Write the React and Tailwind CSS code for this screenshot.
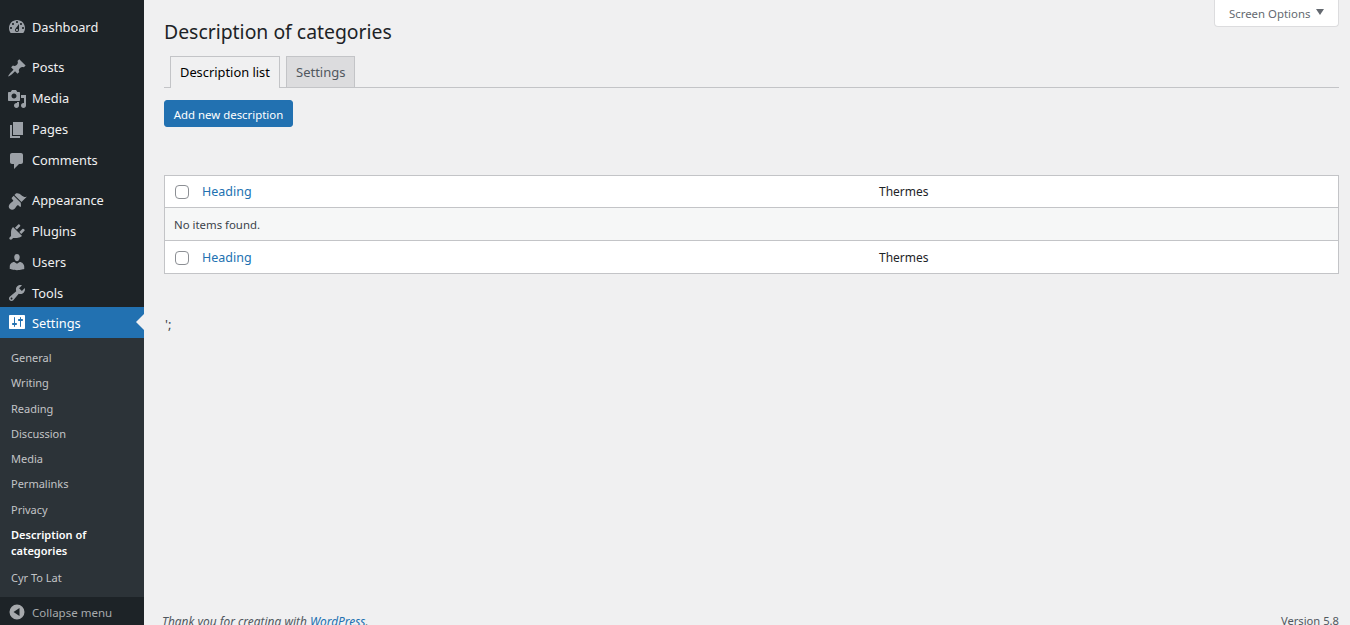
import React from "react";

const ICONS = {
  dashboard: "M3.76 16h12.48c1.1-1.37 1.76-3.11 1.76-5 0-4.42-3.58-8-8-8s-8 3.58-8 8c0 1.89.66 3.63 1.76 5zM10 4c.55 0 1 .45 1 1s-.45 1-1 1-1-.45-1-1 .45-1 1-1zM6 6c.55 0 1 .45 1 1s-.45 1-1 1-1-.45-1-1 .45-1 1-1zm8 0c.55 0 1 .45 1 1s-.45 1-1 1-1-.45-1-1 .45-1 1-1zm-5.37 5.55L12 7v6c0 1.1-.9 2-2 2s-2-.9-2-2c0-.57.24-1.08.63-1.45zM4 10c.55 0 1 .45 1 1s-.45 1-1 1-1-.45-1-1 .45-1 1-1zm12 0c.55 0 1 .45 1 1s-.45 1-1 1-1-.45-1-1 .45-1 1-1zm-5 3c0-.55-.45-1-1-1s-1 .45-1 1 .45 1 1 1 1-.45 1-1z",
  posts: "M10.44 3.02l1.82-1.82 6.36 6.35-1.83 1.82c-1.05-.68-2.48-.57-3.41.36l-.75.75c-.92.93-1.04 2.35-.35 3.41l-1.83 1.82-2.41-2.41-2.8 2.79c-.42.42-3.38 2.71-3.8 2.29s1.86-3.39 2.28-3.81l2.79-2.79L4.1 9.36l1.83-1.82c1.05.69 2.48.57 3.4-.36l.75-.75c.93-.92 1.05-2.35.36-3.41z",
  media: "M13 11V4c0-.55-.45-1-1-1h-1.67L9 1H5L3.67 3H2c-.55 0-1 .45-1 1v7c0 .55.45 1 1 1h10c.55 0 1-.45 1-1zM7 4.5c1.38 0 2.5 1.12 2.5 2.5S8.38 9.5 7 9.5 4.5 8.38 4.5 7 5.62 4.5 7 4.5zM14 6h5v10.5c0 1.38-1.12 2.5-2.5 2.5S14 17.88 14 16.5s1.12-2.5 2.5-2.5c.17 0 .34.02.5.05V9h-3V6zm-4 8.05V13h2v3.5c0 1.38-1.12 2.5-2.5 2.5S7 17.88 7 16.5 8.12 14 9.5 14c.17 0 .34.02.5.05z",
  pages: "M6 15V2h10v13H6zm-1 1h8v2H3V5h2v11z",
  comments: "M5 2h9c1.1 0 2 .9 2 2v7c0 1.1-.9 2-2 2h-2l-5 5v-5H5c-1.1 0-2-.9-2-2V4c0-1.1.9-2 2-2z",
  appearance: "M14.48 11.06L7.41 3.99l1.5-1.5c.5-.56 2.3-.47 3.51.32 1.21.8 1.43 1.28 2.91 2.1 1.18.64 2.45 1.26 4.45.85zm-.71.71L6.7 4.7 4.93 6.47c-.39.39-.39 1.02 0 1.41l1.06 1.06c.39.39.39 1.03 0 1.42-.6.6-1.43 1.11-2.21 1.69-.35.26-.7.53-1.01.84-1.34 1.34-1.34 3.5 0 4.84s3.5 1.34 4.84 0c.31-.31.58-.66.84-1.01.58-.78 1.09-1.61 1.69-2.21.39-.39 1.03-.39 1.42 0l1.06 1.06c.39.39 1.02.39 1.41 0z",
  plugins: "M13.11 4.36L9.87 7.6 8 5.73l3.24-3.24c.35-.34 1.05-.2 1.56.32.52.51.66 1.21.31 1.55zm-8 1.77l.91-1.12 9.01 9.01-1.19.84c-.71.71-2.63 1.16-3.82 1.16H6.14L4.9 17.26c-.59.59-1.54.59-2.12 0-.59-.58-.59-1.53 0-2.12l1.24-1.24v-3.88c0-1.13.4-3.19 1.09-3.89zm7.26 3.97l3.24-3.24c.34-.35 1.04-.21 1.55.31.52.51.66 1.21.31 1.55l-3.24 3.25z",
  users: "M10 9.25c-2.27 0-2.73-3.44-2.73-3.44C7 4.02 7.82 2 9.97 2c2.16 0 2.98 2.02 2.71 3.81 0 0-.41 3.44-2.68 3.44zm0 2.57L12.72 10c2.39 0 4.52 2.33 4.52 4.53v2.49s-3.65 1.13-7.24 1.13c-3.65 0-7.24-1.13-7.24-1.13v-2.49c0-2.25 1.94-4.48 4.47-4.48z",
  tools: "M16.68 9.77c-1.34 1.34-3.3 1.67-4.95.99l-5.41 6.52c-.99.99-2.59.99-3.58 0s-.99-2.59 0-3.57l6.52-5.42c-.68-1.65-.35-3.61.99-4.95 1.28-1.28 3.12-1.62 4.72-1.06l-2.89 2.89 2.82 2.82 2.86-2.87c.53 1.58.18 3.39-1.08 4.65zM3.81 16.21c.4.39 1.04.39 1.43 0 .4-.4.4-1.04 0-1.43-.39-.4-1.03-.4-1.43 0-.39.39-.39 1.03 0 1.43z",
  settings: "M18 16V4c0-.55-.45-1-1-1H3c-.55 0-1 .45-1 1v12c0 .55.45 1 1 1h14c.55 0 1-.45 1-1zM8 11h1c.55 0 1 .45 1 1s-.45 1-1 1H8v1.5c0 .28-.22.5-.5.5s-.5-.22-.5-.5V13H6c-.55 0-1-.45-1-1s.45-1 1-1h1V5.5c0-.28.22-.5.5-.5s.5.22.5.5V11zm5-2h-1c-.55 0-1-.45-1-1s.45-1 1-1h1V5.5c0-.28.22-.5.5-.5s.5.22.5.5V7h1c.55 0 1 .45 1 1s-.45 1-1 1h-1v5.5c0 .28-.22.5-.5.5s-.5-.22-.5-.5V9z",
  collapse: "M10 2.5a7.5 7.5 0 1 0 0 15 7.5 7.5 0 0 0 0-15zM12.5 6v8L6.5 10z",
};

const Icon = ({ name, className = "" }) => (
  <svg viewBox="0 0 20 20" className={`w-5 h-5 shrink-0 fill-current ${className}`}>
    <path fillRule="evenodd" d={ICONS[name]} />
  </svg>
);

const MenuItem = ({ icon, label, current }) => (
  <div className={`relative flex items-center shrink-0 pl-[7px] gap-[5px] text-[12.8px] ${current ? "-mt-[1.9px] h-[31px] bg-[#2271b1] text-white" : "h-[30.9px] text-[#f0f0f1]"}`}>
    <Icon name={icon} className={current ? "text-white" : "text-[#9ca1a7]"} />
    <span className={current ? "pt-[2px]" : ""}>{label}</span>
    {current && <div className="absolute right-0 top-1/2 -translate-y-1/2 border-y-[8px] border-r-[8px] border-y-transparent border-r-[#f0f0f1]" />}
  </div>
);

const subItems = ["General", "Writing", "Reading", "Discussion", "Media", "Permalinks", "Privacy"];

const Sidebar = () => (
  <aside className="w-[144px] shrink-0 bg-[#1d2327] flex flex-col pt-3">
    <MenuItem icon="dashboard" label="Dashboard" />
    <div className="h-[9.5px] shrink-0" />
    <MenuItem icon="posts" label="Posts" />
    <MenuItem icon="media" label="Media" />
    <MenuItem icon="pages" label="Pages" />
    <MenuItem icon="comments" label="Comments" />
    <div className="h-[9.3px] shrink-0" />
    <MenuItem icon="appearance" label="Appearance" />
    <MenuItem icon="plugins" label="Plugins" />
    <MenuItem icon="users" label="Users" />
    <MenuItem icon="tools" label="Tools" />
    <MenuItem icon="settings" label="Settings" current />
    <div className="bg-[#2c3338] pt-[7.5px] h-[259px] shrink-0 text-[11px] leading-[16.3px] text-[#c3c4c7]">
      {subItems.map((s) => (
        <div key={s} className="pl-[11px] py-[4.5px]">{s}</div>
      ))}
      <div className="pl-[11px] pr-2 pt-[4.5px] pb-[5.5px] text-white font-semibold">Description of categories</div>
      <div className="pl-[11px] py-[4.5px]">Cyr To Lat</div>
    </div>
    <div className="flex items-center h-[30px] shrink-0 pl-[7px] gap-[5px] text-[11.5px] text-[#a7aaad]">
      <Icon name="collapse" className="text-[#a7aaad]" />
      <span className="pt-px">Collapse menu</span>
    </div>
  </aside>
);

const Row = ({ height }) => (
  <div className={`${height} flex items-center pl-[10px] bg-white text-[12.5px]`}>
    <span className="w-[14px] h-[14px] rounded-[4px] border border-[#8c8f94] bg-white shrink-0" />
    <a className="ml-[13px] w-[677px] pt-px text-[#2271b1]">Heading</a>
    <span className="text-[12px] text-[#1d2327]">Thermes</span>
  </div>
);

const Main = () => (
  <main className="flex-1 min-w-0 flex flex-col pl-5 pr-[11px]">
    <div className="flex justify-end">
      <button className="w-[125px] h-[27px] pl-[14px] pt-px flex items-center gap-[6px] bg-white border border-t-0 border-[#dcdcde] rounded-b-[4px] text-[11.4px] text-[#646970]">
        Screen Options
        <span className="border-x-[4.5px] border-t-[6px] border-x-transparent border-t-[#646970] -mt-[3px]" />
      </button>
    </div>
    <h1 className="-mt-[11px] h-[31px] leading-[31px] text-[19.4px] text-[#1d2327]">Description of categories</h1>
    <div className="mt-[9px] h-[32px] flex items-end gap-[6px] pl-[6px] border-b border-[#c3c4c7]">
      <div className="h-[32px] -mb-px flex items-center pt-px px-[9px] w-[110px] bg-[#f0f0f1] border border-b-0 border-[#c3c4c7] text-[12.85px] whitespace-nowrap text-black">Description list</div>
      <div className="h-[31px] flex items-center pt-px px-[9px] w-[69px] bg-[#dcdcde] border border-b-0 border-[#c3c4c7] text-[13px] text-[#50575e]">Settings</div>
    </div>
    <div className="mt-[12px]">
      <button className="h-[27px] w-[129px] pt-[2px] rounded-[3px] bg-[#2271b1] border border-[#2271b1] text-[11.4px] text-white">Add new description</button>
    </div>
    <div className="mt-[48px] border border-[#c3c4c7]">
      <Row height="h-[31px]" />
      <div className="h-[34px] flex items-center pt-px pl-[9px] bg-[#f6f7f7] border-y border-[#c3c4c7] text-[11.4px] text-[#3c434a]">
        No items found.
      </div>
      <Row height="h-[32px] pt-px" />
    </div>
    <p className="mt-[41px] pl-px text-[13px] leading-[18px] text-[#3c434a]">';</p>
    <footer className="mt-[280px] flex justify-between text-[11.9px] leading-[16px] text-[#50575e]">
      <p className="-ml-[2px] italic">Thank you for creating with <a className="text-[#2271b1] underline">WordPress</a>.</p>
      <p className="text-[11.2px]">Version 5.8</p>
    </footer>
  </main>
);

export default function App() {
  return (
    <div className="flex h-[625px] w-[1350px] overflow-hidden bg-[#f0f0f1] font-['Noto_Sans',sans-serif]">
      <Sidebar />
      <Main />
    </div>
  );
}
